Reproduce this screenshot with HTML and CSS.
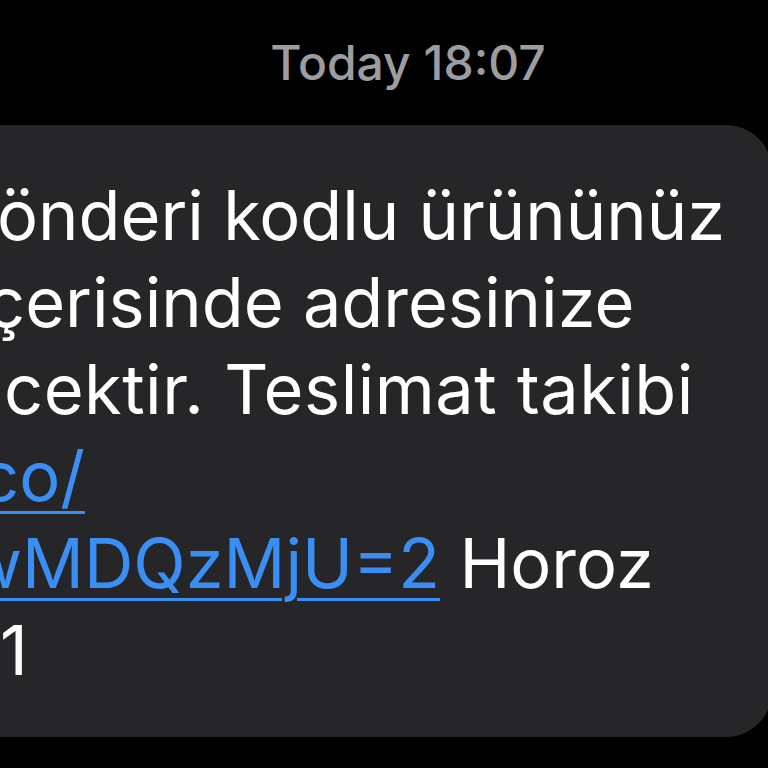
FILE: index.html
```html
<!DOCTYPE html>
<html>
<head>
    <meta charset="utf-8">
    <title>Mesajlar</title>
    <link rel="stylesheet" href="styles.css">
</head>
<body>
    <div class="thread">
        <div class="timestamp">Today 18:07</div>
        <div class="bubble">
            <div class="line line-1">önderi kodlu ürününüz</div>
            <div class="line line-2">çerisinde adresinize</div>
            <div class="line line-3">cektir. Teslimat takibi</div>
            <div class="line line-4"><a href="#">co/</a></div>
            <div class="line line-5"><a href="#">wMDQzMjU=2</a> Horoz</div>
            <div class="line line-6">1</div>
        </div>
    </div>
</body>
</html>
```

FILE: styles.css
```css
html, body {
    margin: 0;
    height: 100%;
    overflow: hidden;
}

body {
    background-color: #000;
    font-family: Inter, "Noto Sans", sans-serif;
    -webkit-font-smoothing: antialiased;
}

.thread {
    display: flex;
    flex-direction: column;
}

.timestamp {
    color: #9c9ca1;
    font-size: 48px;
    font-weight: 500;
    text-align: center;
    padding-left: 48px;
    padding-top: 33px;
    height: 125px;
    box-sizing: border-box;
}

.bubble {
    background-color: #262629;
    color: #fff;
    margin-left: -60px;
    width: 832px;
    padding: 47px 0 43px 60px;
    border-radius: 46px;
    font-size: 68.5px;
    line-height: 87px;
    box-sizing: border-box;
}

.line {
    white-space: nowrap;
}

.line a {
    color: #3a8ef4;
    text-decoration: underline;
    text-decoration-thickness: 3px;
    text-underline-offset: 10px;
}

.line-1 { margin-left: -3px; }
.line-2 { margin-left: -14px; }
.line-3 { margin-left: 4px; letter-spacing: 0.5px; }
.line-4 { margin-left: -20px; }
.line-5 { margin-left: -34px; }
.line-6 { margin-left: 0; }
```
